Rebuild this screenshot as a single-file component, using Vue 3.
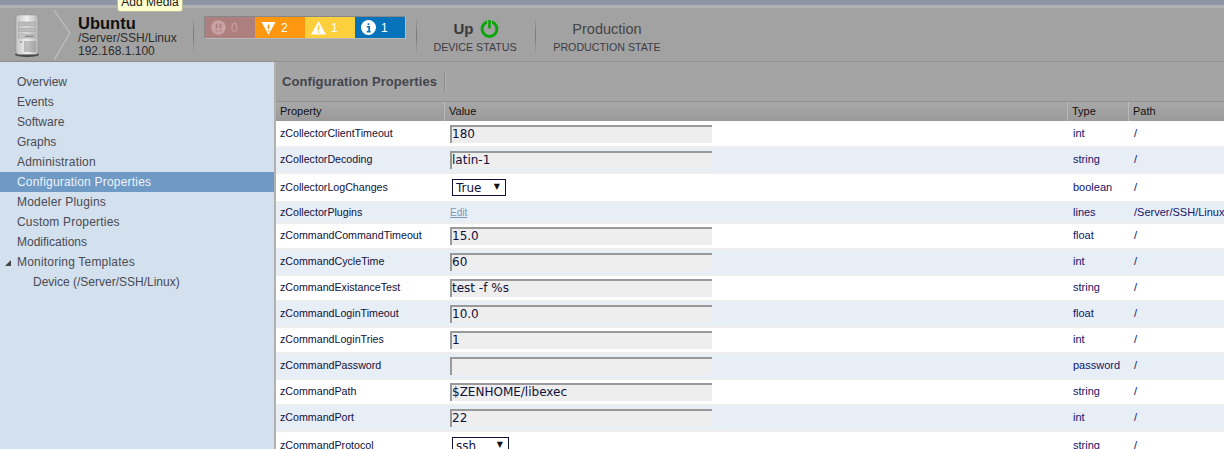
<script setup>
const navItems = [
  { label: 'Overview' },
  { label: 'Events' },
  { label: 'Software' },
  { label: 'Graphs' },
  { label: 'Administration', wide: true },
  { label: 'Configuration Properties', active: true, wide: true },
  { label: 'Modeler Plugins', wide: true },
  { label: 'Custom Properties', wide: true },
  { label: 'Modifications' },
  { label: 'Monitoring Templates', open: true, wide: true },
  { label: 'Device (/Server/SSH/Linux)', child: true },
]

const rows = [
  { name: 'zCollectorClientTimeout', kind: 'input', value: '180', type: 'int', path: '/' },
  { name: 'zCollectorDecoding', kind: 'input', value: 'latin-1', type: 'string', path: '/' },
  { name: 'zCollectorLogChanges', kind: 'select', value: 'True', type: 'boolean', path: '/', tall: true },
  { name: 'zCollectorPlugins', kind: 'edit', type: 'lines', path: '/Server/SSH/Linux', short: true },
  { name: 'zCommandCommandTimeout', kind: 'input', value: '15.0', type: 'float', path: '/' },
  { name: 'zCommandCycleTime', kind: 'input', value: '60', type: 'int', path: '/' },
  { name: 'zCommandExistanceTest', kind: 'input', value: 'test -f %s', type: 'string', path: '/' },
  { name: 'zCommandLoginTimeout', kind: 'input', value: '10.0', type: 'float', path: '/' },
  { name: 'zCommandLoginTries', kind: 'input', value: '1', type: 'int', path: '/' },
  { name: 'zCommandPassword', kind: 'input', value: '', type: 'password', path: '/' },
  { name: 'zCommandPath', kind: 'input', value: '$ZENHOME/libexec', type: 'string', path: '/' },
  { name: 'zCommandPort', kind: 'input', value: '22', type: 'int', path: '/' },
  { name: 'zCommandProtocol', kind: 'select', value: 'ssh', type: 'string', path: '/', tall: true, wide: true },
]
</script>

<template>
  <div class="page">
    <div class="topstrip"></div>

    <header class="device-bar">
      <svg class="server-icon" width="26" height="44" viewBox="0 0 26 44">
        <defs>
          <linearGradient id="case" x1="0" y1="0" x2="1" y2="0">
            <stop offset="0" stop-color="#c4c4c4" />
            <stop offset="0.5" stop-color="#f0f0f0" />
            <stop offset="1" stop-color="#b8b8b8" />
          </linearGradient>
        </defs>
        <ellipse cx="13" cy="40.5" rx="12" ry="2.6" fill="#2a2a2a" opacity="0.75" />
        <path d="M2 3 Q2 1 5 1 H21 Q24 1 24 3 V38 Q24 40.5 21 40.5 H5 Q2 40.5 2 38 Z" fill="url(#case)" stroke="#8c8c8c" stroke-width="0.5" />
        <rect x="4.5" y="8" width="17" height="4" fill="#bcbcbc" stroke="#999" stroke-width="0.5" />
        <rect x="4.5" y="14" width="17" height="4" fill="#bcbcbc" stroke="#999" stroke-width="0.5" />
        <rect x="4.5" y="20" width="17" height="4" fill="#c4c4c4" stroke="#999" stroke-width="0.5" />
        <rect x="11" y="21.5" width="9" height="1.5" fill="#8f8f8f" />
        <path d="M6 27 H8 V29 H6 Z" fill="#a8a8a8" />
        <path d="M11 27V38M13 27V38M15 27V38M17 27V38M19 27V38M21 27V38" stroke="#777" stroke-width="0.8" />
      </svg>

      <svg class="chevron" width="18" height="50" viewBox="0 0 18 50">
        <path d="M1 0 L17 23 L1 50" fill="none" stroke="#bababa" stroke-width="1.5" />
      </svg>

      <div class="device-name">
        <div class="title">Ubuntu</div>
        <div class="sub">/Server/SSH/Linux</div>
        <div class="sub">192.168.1.100</div>
      </div>

      <div class="divider first"></div>

      <div class="events">
        <div class="ev critical">
          <svg width="15" height="15" viewBox="0 0 14 14">
            <circle cx="7" cy="7" r="6.8" fill="#c9a3a3" />
            <path d="M5.2 3.5V8M8.8 3.5V8M5.2 9.5V10.7M8.8 9.5V10.7" stroke="#ab7e7e" stroke-width="1.6" />
          </svg>
          <span>0</span>
        </div>
        <div class="ev error">
          <svg width="15" height="14" viewBox="0 0 15 14">
            <path d="M0.5 1 H14.5 L7.5 13.8 Z" fill="#fff" />
            <path d="M7.5 3.5V8M7.5 9.2V10.6" stroke="#ff9711" stroke-width="1.7" />
          </svg>
          <span>2</span>
        </div>
        <div class="ev warning">
          <svg width="15" height="14" viewBox="0 0 15 14">
            <path d="M7.5 0.3 L15 13.5 H0 Z" fill="#fff" />
            <path d="M7.5 4.5V9M7.5 10.2V11.8" stroke="#fcd03c" stroke-width="1.7" />
          </svg>
          <span>1</span>
        </div>
        <div class="ev info">
          <svg width="15" height="15" viewBox="0 0 14 14">
            <circle cx="7" cy="7" r="7" fill="#fff" />
            <path d="M7 3V4.6M5.4 6.3H7.6V10.4M5.4 10.8H9" stroke="#0672ba" stroke-width="1.6" fill="none" />
          </svg>
          <span>1</span>
        </div>
      </div>

      <div class="divider"></div>

      <div class="state status">
        <div class="state-main">
          <b>Up</b>
          <svg width="19" height="19" viewBox="0 0 19 19">
            <circle cx="9.5" cy="10" r="7.4" fill="none" stroke="#09a509" stroke-width="3" />
            <path d="M9.5 1V9.5" stroke="#a2a2a2" stroke-width="5" />
            <path d="M9.5 1V9.5" stroke="#09a509" stroke-width="2.6" />
          </svg>
        </div>
        <div class="state-label">DEVICE STATUS</div>
      </div>

      <div class="divider"></div>

      <div class="state prod">
        <div class="state-main prod-name">Production</div>
        <div class="state-label">PRODUCTION STATE</div>
      </div>
    </header>

    <div class="tooltip">Add Media</div>

    <div class="body-row">
      <nav class="sidebar">
        <div
          v-for="item in navItems"
          :key="item.label"
          :class="['nav-item', { active: item.active, child: item.child, wide: item.wide }]"
        >
          <span v-if="item.open" class="tree-arrow"></span>
          {{ item.label }}
        </div>
      </nav>

      <main class="panel">
        <div class="panel-head">
          <h2>Configuration Properties</h2>
          <div class="panel-sep"></div>
        </div>

        <div class="grid-head">
          <div class="cell">Property</div>
          <div class="cell">Value</div>
          <div class="cell">Type</div>
          <div class="cell">Path</div>
        </div>

        <div
          v-for="(row, i) in rows"
          :key="row.name"
          :class="['grid-row', { odd: i % 2 === 1, tall: row.tall, short: row.short }]"
        >
          <div class="c-name">{{ row.name }}</div>
          <div class="c-value">
            <div v-if="row.kind === 'input'" class="fake-input">{{ row.value }}</div>
            <div v-else-if="row.kind === 'select'" :class="['fake-select', { wide: row.wide }]">
              <span>{{ row.value }}</span>
              <span class="caret">▼</span>
            </div>
            <a v-else class="edit-link">Edit</a>
          </div>
          <div class="c-type">{{ row.type }}</div>
          <div class="c-path">{{ row.path }}</div>
        </div>
      </main>
    </div>
  </div>
</template>

<style scoped>
.page {
  position: relative;
  width: 1224px;
  height: 449px;
  overflow: hidden;
  font-family: "Liberation Sans", Arial, sans-serif;
  background: #fff;
}

.topstrip {
  height: 5px;
  background: #8e96a6;
  border-bottom: 3px solid #b1b1b1;
}

.device-bar {
  height: 54px;
  box-sizing: border-box;
  display: flex;
  align-items: center;
  background: #a2a2a2;
  border-bottom: 1px solid #8f8f8f;
  color: #333;
}

.server-icon {
  margin-left: 14px;
  margin-top: 2px;
  flex: none;
}

.chevron {
  margin-left: 13px;
  flex: none;
}

.device-name {
  margin-left: 7px;
  width: 115px;
  flex: none;
  padding-top: 4px;
}

.title {
  font-size: 16.5px;
  font-weight: bold;
  line-height: 17px;
  color: #111;
}

.sub {
  font-size: 12px;
  line-height: 13px;
  color: #2c2c2c;
}

.divider {
  width: 1px;
  height: 38px;
  flex: none;
  background: linear-gradient(to bottom, #a2a2a2, #777 50%, #a2a2a2);
}

.divider.first {
  margin-right: 10px;
}

.events {
  display: flex;
  flex: none;
  border: 1px solid #888;
  border-bottom-color: #bbb;
  border-right-color: #bbb;
  margin-right: 10px;
  margin-top: -14px;
}

.ev {
  width: 50px;
  height: 21px;
  display: flex;
  align-items: center;
  gap: 5px;
  padding-left: 6px;
  box-sizing: border-box;
  font-size: 12px;
  color: #fff;
}

.ev.critical { background: #ad7f7f; color: #c9a3a3; }
.ev.error { background: #ff9711; }
.ev.warning { background: #fcd03c; }
.ev.info { background: #0672ba; }

.state {
  flex: none;
  text-align: center;
  padding-top: 2px;
}

.status { width: 118px; }
.prod { width: 142px; }

.state-main {
  height: 21px;
  display: flex;
  align-items: center;
  justify-content: center;
  gap: 6px;
  font-size: 15px;
  color: #3a3a3a;
}

.prod-name {
  color: #444;
  font-size: 14.5px;
}

.state-label {
  margin-top: 2px;
  font-size: 10.67px;
  line-height: 12px;
  color: #3c3c44;
}

.status .state-label {
  padding-right: 2px;
}

.tooltip {
  position: absolute;
  left: 117px;
  top: -6px;
  width: 66px;
  height: 18px;
  box-sizing: border-box;
  background: #ffffcf;
  border: 1px solid #b8b89c;
  border-radius: 0 0 3px 3px;
  font-size: 12px;
  line-height: 15px;
  text-align: center;
  color: #222;
}

.body-row {
  display: flex;
  height: 387px;
}

.sidebar {
  width: 274px;
  flex: none;
  box-sizing: border-box;
  background: #d3e0ee;
  padding-top: 10px;
}

.nav-item {
  position: relative;
  height: 20px;
  line-height: 20px;
  padding-left: 17px;
  font-size: 12px;
  color: #4a4a52;
}

.nav-item.wide {
  letter-spacing: 0.2px;
}

.nav-item.active {
  background: #6f9ac6;
  color: #eef3f9;
}

.nav-item.child {
  padding-left: 33px;
}

.tree-arrow {
  position: absolute;
  left: 5px;
  top: 8px;
  width: 0;
  height: 0;
  border-left: 6px solid transparent;
  border-bottom: 6px solid #444;
}

.panel {
  flex: 1;
  min-width: 0;
  border-left: 2px solid #b1b1b1;
  background: #fff;
}

.panel-head {
  height: 40px;
  box-sizing: border-box;
  display: flex;
  align-items: center;
  padding-left: 6px;
  background: #a4a4a4;
  border-bottom: 1px solid #929292;
}

.panel-head h2 {
  margin: 0;
  font-size: 13px;
  font-weight: bold;
  letter-spacing: 0.08px;
  color: #45454d;
}

.panel-sep {
  width: 1px;
  height: 20px;
  margin-left: 7px;
  background: #8c8c8c;
  box-shadow: 1px 0 0 #b5b5b5;
}

.grid-head,
.grid-row {
  display: grid;
  grid-template-columns: 169px 623px 61px 1fr;
}

.grid-head {
  height: 19px;
  background: linear-gradient(to bottom, #a8a8a8, #9a9a9a);
  font-size: 11px;
  color: #111;
}

.grid-head .cell {
  line-height: 18px;
  padding-left: 4px;
  border-right: 1px solid #b8b8b8;
}

.grid-head .cell:last-child { border-right: 0; }

.grid-row {
  height: 26px;
  box-sizing: border-box;
  align-items: center;
  background: #fff;
  border-top: 2px solid #eeeeee;
  padding-bottom: 2px;
  font-size: 11px;
  color: #12124a;
}

.grid-head + .grid-row {
  height: 25px;
  border-top: 0;
  padding-bottom: 1px;
}

.grid-row.odd { background: #e8eef6; }
.grid-row.tall { height: 29px; }
.grid-row.short { height: 21px; }

.c-name {
  padding-left: 4px;
  font-size: 10.67px;
  color: #10103c;
}

.c-value {
  padding-left: 5px;
}

.c-type,
.c-path {
  padding-left: 5px;
  white-space: nowrap;
  color: #14146a;
}

.fake-input {
  width: 262px;
  height: 18px;
  margin-top: 2px;
  box-sizing: border-box;
  background: #eeeeee;
  border-top: 2px solid #999;
  border-left: 2px solid #999;
  font-family: "DejaVu Sans", sans-serif;
  font-size: 12px;
  line-height: 15px;
  color: #10103c;
}

.fake-select {
  margin-left: 2px;
  margin-top: 2px;
  width: 54px;
  height: 17px;
  box-sizing: border-box;
  display: flex;
  justify-content: space-between;
  align-items: center;
  padding: 0 5px 0 3px;
  background: #fff;
  border: 1px solid #10103c;
  font-family: "DejaVu Sans", sans-serif;
  font-size: 12px;
  color: #10103c;
}

.fake-select.wide { width: 57px; }

.caret {
  font-size: 8px;
  margin-top: -3px;
  color: #111;
}

.edit-link {
  font-size: 10px;
  color: #7b98b8;
  text-decoration: underline;
}
</style>

<style>
html, body {
  margin: 0;
  overflow: hidden;
}
</style>
